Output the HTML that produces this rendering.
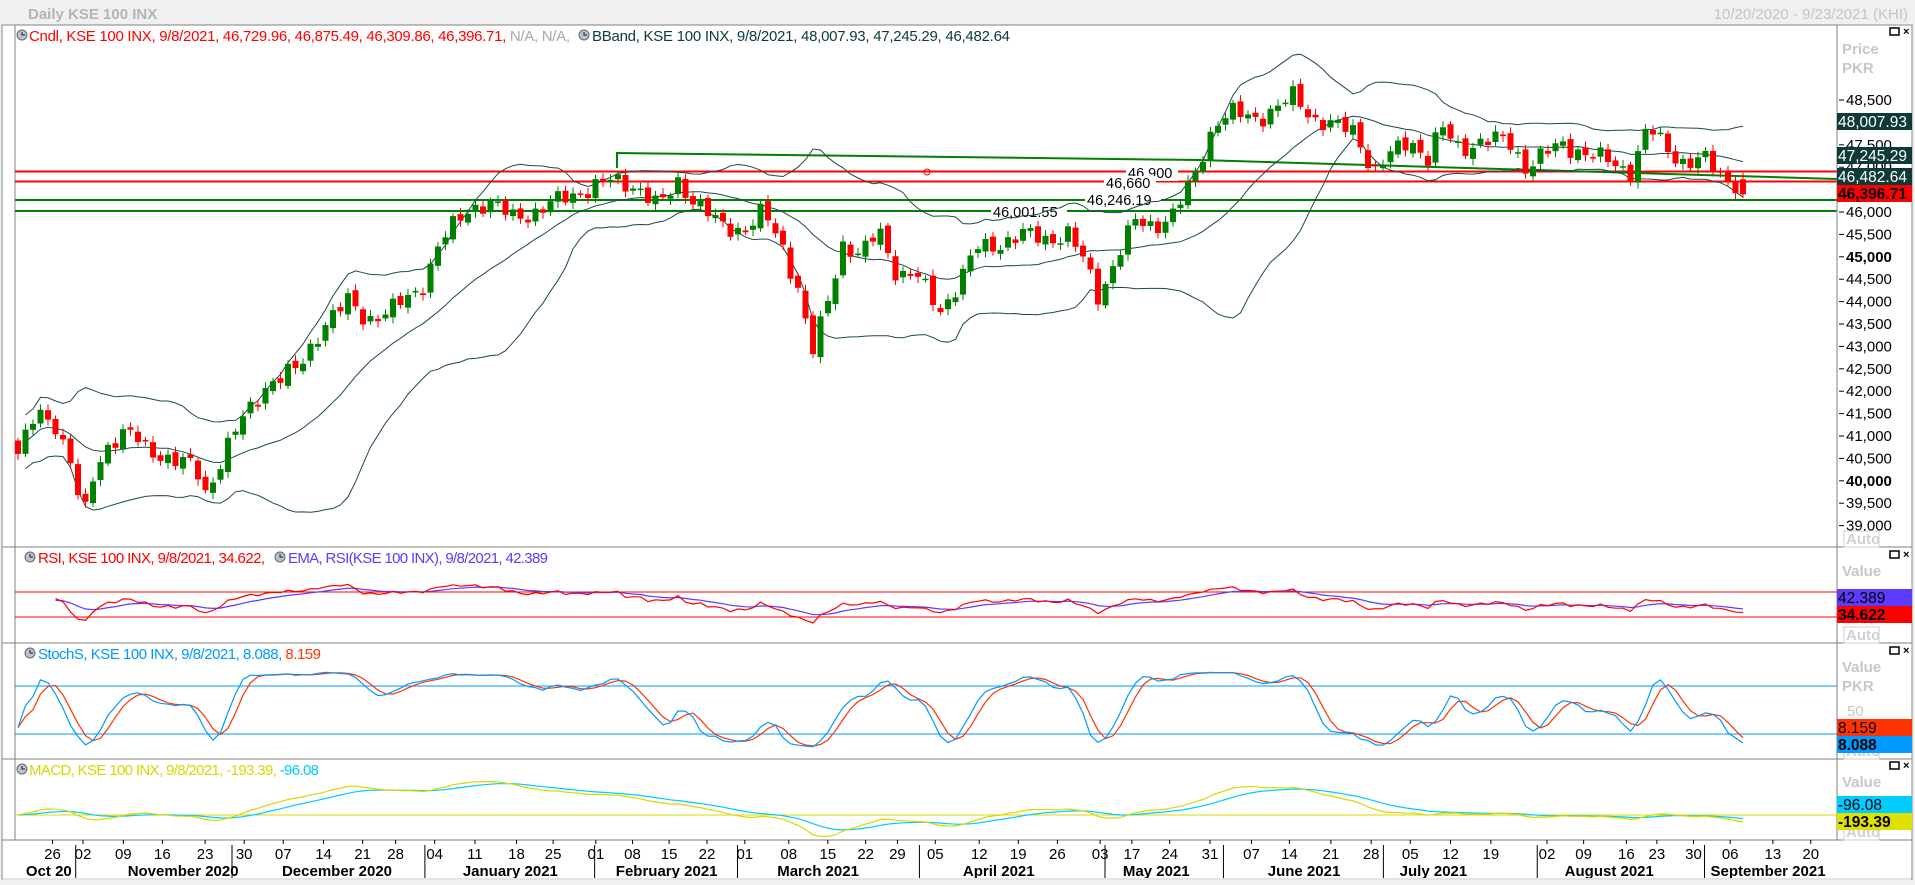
<!DOCTYPE html>
<html><head><meta charset="utf-8">
<style>
html,body{margin:0;padding:0;background:#f0f0f0;width:1915px;height:885px;overflow:hidden;font-family:"Liberation Sans",sans-serif;}
svg{display:block}
text{font-family:"Liberation Sans",sans-serif;}
</style></head><body>
<svg id="s" width="1915" height="885" viewBox="0 0 1915 885" xmlns="http://www.w3.org/2000/svg">
<rect x="0" y="0" width="1915" height="885" fill="#f0f0f0"/>
<rect x="2" y="25" width="1910" height="854" fill="#fff" stroke="#8a8a8a"/>
<rect x="15" y="25" width="1822" height="815" fill="#fff" stroke="#808080"/>
<text x="28" y="19" font-size="15" font-weight="bold" fill="#b4b4b4">Daily KSE 100 INX</text>
<text x="1908" y="19" font-size="15" fill="#c4c4c4" text-anchor="end">10/20/2020 - 9/23/2021 (KHI)</text>
<g id="g"></g>
</svg>
<script>
var g=document.getElementById('g');var h='';
function add(s){h+=s;}
var kp=[[15,40600],[30,41500],[45,41300],[60,40300],[68,39000],[75,40000],[90,40900],[105,41100],[120,40700],[140,40500],[160,40300],[168,39700],[180,40400],[190,41000],[205,41600],[220,42200],[245,42500],[265,43500],[285,44000],[300,43600],[320,43800],[345,44300],[360,45300],[375,45800],[385,46100],[400,46200],[420,45900],[440,46000],[460,46300],[480,46500],[500,46700],[520,46600],[540,46100],[555,46700],[570,46200],[590,45700],[610,45600],[625,46000],[640,45300],[655,44200],[665,42800],[680,44200],[690,45300],[705,45000],[720,45600],[735,44600],[750,44600],[770,43800],[785,44400],[800,45200],[820,45300],[840,45500],[860,45400],[875,45500],[890,44800],[900,44100],[915,45000],[930,45800],[945,45700],[960,45900],[975,46600],[985,47300],[995,48000],[1010,48200],[1030,48100],[1045,48300],[1060,48600],[1075,48100],[1095,47900],[1110,47800],[1125,46900],[1140,47300],[1155,47600],[1170,47200],[1180,47900],[1195,47400],[1215,47600],[1235,47600],[1250,47000],[1265,47300],[1280,47500],[1300,47300],[1320,47100],[1335,46900],[1350,47900],[1365,47400],[1380,47100],[1395,47200],[1410,46800],[1425,46600],[1432,46400]];
function interp(t){if(t<=kp[0][0])return kp[0][1];for(var k=1;k<kp.length;k++){if(t<=kp[k][0]){var a=kp[k-1],b=kp[k];return a[1]+(b[1]-a[1])*(t-a[0])/(b[0]-a[0]);}}return kp[kp.length-1][1];}
function py(p){return 100+(48500-p)*0.0448;}
var N=231,X=[],C=[],O=[],H=[],L=[];
for(var i=0;i<N;i++){var x=18+i*7.5;X.push(x);var c=interp(x/1.221)+150*Math.sin(i*2.3)+100*Math.sin(i*0.9);if(i==N-1)c=46396;C.push(c);}
for(var i=0;i<N;i++){var o=i?C[i-1]+70*Math.sin(i*3.1):40900;O.push(o);H.push(Math.max(o,C[i])+60+80*Math.abs(Math.sin(i*1.3)));L.push(Math.min(o,C[i])-60-80*Math.abs(Math.cos(i*1.7)));}
O[N-1]=46730;H[N-1]=46875;L[N-1]=46310;
add('<line x1="15" x2="1837" y1="171.5" y2="171.5" stroke="#ff0000" stroke-width="2"/>');
add('<line x1="15" x2="1837" y1="181.5" y2="181.5" stroke="#ff0000" stroke-width="2"/>');
add('<line x1="15" x2="1837" y1="200" y2="200" stroke="#008000" stroke-width="2"/>');
add('<line x1="15" x2="1837" y1="211" y2="211" stroke="#008000" stroke-width="2"/>');
add('<polyline points="617,168 617,153 1200,160 1837,179" fill="none" stroke="#008000" stroke-width="2"/>');
add('<circle cx="927" cy="172" r="3" fill="none" stroke="#ff0000"/>');
function lbl(x,y,t){add('<rect x="'+(x-2)+'" y="'+(y-12)+'" width="'+(t.length*8+4)+'" height="15" fill="#fff"/><text x="'+x+'" y="'+y+'" font-size="14.5" fill="#000">'+t+'</text>');}
lbl(1128,178,'46,900');lbl(1106,188,'46,660');lbl(1087,205,'46,246.19');lbl(993,217,'46,001.55');
var up=[],mid=[],lo=[];
for(var i=1;i<N;i++){var n=Math.min(i+1,20),s=0;for(var j=i-n+1;j<=i;j++)s+=C[j];var m=s/n,v=0;for(var j=i-n+1;j<=i;j++)v+=(C[j]-m)*(C[j]-m);var sd=Math.sqrt(v/n);if(i<6)sd=Math.max(sd,300);up.push(X[i]+','+py(m+2*sd).toFixed(1));mid.push(X[i]+','+py(m).toFixed(1));lo.push(X[i]+','+py(m-2*sd).toFixed(1));}
[up,mid,lo].forEach(function(a){add('<polyline points="'+a.join(' ')+'" fill="none" stroke="#1a4a4a" stroke-width="1"/>');});
for(var i=0;i<N;i++){var col=C[i]>=O[i]?'#008000':'#ff0000';var x=X[i];var t=py(Math.max(O[i],C[i])),b=py(Math.min(O[i],C[i]));if(b-t<1.5)b=t+1.5;
add('<line x1="'+x+'" x2="'+x+'" y1="'+py(H[i]).toFixed(1)+'" y2="'+py(L[i]).toFixed(1)+'" stroke="'+col+'"/><rect x="'+(x-3)+'" y="'+t.toFixed(1)+'" width="6" height="'+(b-t).toFixed(1)+'" fill="'+col+'"/>');}
[547,643,759,840].forEach(function(y){add('<line x1="2" x2="1912" y1="'+y+'" y2="'+y+'" stroke="#808080"/>');});
add('<line x1="1837" x2="1837" y1="25" y2="840" stroke="#808080"/>');
function ema(a,n){var k=2/(n+1),r=[],e=a[0];for(var i=0;i<a.length;i++){e=i?a[i]*k+e*(1-k):a[0];r.push(e);}return r;}
var rsi=[],ag=0,al=0;for(var i=0;i<N;i++){if(i==0){rsi.push(50);continue;}var d=C[i]-C[i-1];var gg=Math.max(d,0),ll=Math.max(-d,0);ag=(ag*13+gg)/14;al=(al*13+ll)/14;rsi.push(al==0?50:100-100/(1+ag/al));}
var rsiE=ema(rsi,9);
function ry(v){return 604.5-(v-50)*0.625;}
add('<line x1="15" x2="1837" y1="592" y2="592" stroke="#ff0000"/><line x1="15" x2="1837" y1="617" y2="617" stroke="#ff0000"/>');
function pl(a,f,col,st){var p=[];for(var i=st;i<N;i++)p.push(X[i]+','+f(a[i]).toFixed(1));add('<polyline points="'+p.join(' ')+'" fill="none" stroke="'+col+'" stroke-width="1.2"/>');}
pl(rsiE,ry,'#5b3cff',5);pl(rsi,ry,'#ff0000',5);
var k=[];for(var i=0;i<N;i++){var hh=-1e9,ll2=1e9;for(var j=Math.max(0,i-13);j<=i;j++){hh=Math.max(hh,H[j]);ll2=Math.min(ll2,L[j]);}k.push(100*(C[i]-ll2)/(hh-ll2));}
var ks=[],ds=[];for(var i=0;i<N;i++){var s=0,n=0;for(var j=Math.max(0,i-2);j<=i;j++){s+=k[j];n++;}ks.push(s/n);}
for(var i=0;i<N;i++){var s=0,n=0;for(var j=Math.max(0,i-2);j<=i;j++){s+=ks[j];n++;}ds.push(s/n);}
function sy(v){return 710-(v-50)*0.8;}
add('<line x1="15" x2="1837" y1="686" y2="686" stroke="#0099ff"/><line x1="15" x2="1837" y1="734" y2="734" stroke="#0099ff"/>');
pl(ds,sy,'#ff3300',0);pl(ks,sy,'#0099ff',0);
var e12=ema(C,12),e26=ema(C,26),mac=[];for(var i=0;i<N;i++)mac.push(e12[i]-e26[i]);var sig=ema(mac,9);
function my(v){return 815-v*0.035;}
add('<line x1="15" x2="1837" y1="815" y2="815" stroke="#d8d800"/>');
pl(sig,my,'#00ccff',0);pl(mac,my,'#d8d800',0);
function icon(x,y){add('<circle cx="'+x+'" cy="'+y+'" r="5" fill="#b8c4cc" stroke="#667"/><path d="M'+x+' '+(y-3)+'V'+y+'H'+(x+3)+'" stroke="#222" fill="none" stroke-width="1"/>');}
function FS(w){return ' font-size="15" textLength="'+w+'" lengthAdjust="spacing"';}
icon(22,35);add('<text x="29" y="41"'+FS(541)+'><tspan fill="#ff0000">Cndl, KSE 100 INX, 9/8/2021, 46,729.96, 46,875.49, 46,309.86, 46,396.71,</tspan><tspan fill="#a8a8a8"> N/A, N/A,</tspan></text>');
icon(584,35);add('<text x="592" y="41"'+FS(418)+' fill="#0b3b3b">BBand, KSE 100 INX, 9/8/2021, 48,007.93, 47,245.29, 46,482.64</text>');
icon(30,557);add('<text x="38" y="563"'+FS(227)+' fill="#ff0000">RSI, KSE 100 INX, 9/8/2021, 34.622,</text>');
icon(280,557);add('<text x="288" y="563"'+FS(260)+' fill="#5b3cff">EMA, RSI(KSE 100 INX), 9/8/2021, 42.389</text>');
icon(30,653);add('<text x="38" y="659"'+FS(283)+'><tspan fill="#0099ff">StochS, KSE 100 INX, 9/8/2021, 8.088, </tspan><tspan fill="#ff3300">8.159</tspan></text>');
icon(22,769);add('<text x="29" y="775"'+FS(290)+'><tspan fill="#d8d800">MACD, KSE 100 INX, 9/8/2021, -193.39, </tspan><tspan fill="#00ccff">-96.08</tspan></text>');
function wc(y){add('<rect x="1890" y="'+(y-5)+'" width="9" height="7" fill="none" stroke="#000" stroke-width="1.5"/><text x="1903" y="'+(y+2)+'" font-size="11" font-weight="bold">×</text>');}
wc(33);wc(556);wc(652);wc(767);
add('<text x="1842" y="54" font-size="15" font-weight="bold" fill="#c8c8c8">Price</text><text x="1842" y="73" font-size="15" font-weight="bold" fill="#c8c8c8">PKR</text>');
for(var p=48500;p>=39000;p-=500){var y=py(p);var b=(p==45000||p==40000);add('<line x1="1839" x2="1844" y1="'+y+'" y2="'+y+'" stroke="#000"/><text x="1846" y="'+(y+5)+'" font-size="15"'+(b?' font-weight="bold"':'')+'>'+(p+'').replace(/(\d\d)(\d\d\d)/,'$1,$2')+'</text>');}
function auto(y){add('<rect x="1844" y="'+y+'" width="35" height="16" fill="#fff" stroke="#ccc"/><text x="1846" y="'+(y+13)+'" font-size="15" font-weight="bold" fill="#d0d0d0">Auto</text>');}
auto(531);auto(627);auto(743);auto(824);
function box(y,bg,fg,t,bold){add('<rect x="1837" y="'+y+'" width="75" height="17" fill="'+bg+'"/><text x="1838" y="'+(y+14)+'" font-size="15.5"'+(bold?' font-weight="bold"':'')+' fill="'+fg+'">'+t+'</text>');}
box(113,'#0e3a3a','#fff','48,007.93');box(147,'#0e3a3a','#fff','47,245.29');box(168,'#0e3a3a','#fff','46,482.64');box(185,'#ff0000','#000','46,396.71',true);
add('<text x="1842" y="576" font-size="15" font-weight="bold" fill="#c8c8c8">Value</text><text x="1842" y="672" font-size="15" font-weight="bold" fill="#c8c8c8">Value</text><text x="1842" y="691" font-size="15" font-weight="bold" fill="#c8c8c8">PKR</text><text x="1847" y="716" font-size="15" fill="#c8c8c8">50</text><text x="1842" y="787" font-size="15" font-weight="bold" fill="#c8c8c8">Value</text>');
box(589,'#5b3cff','#000','42.389');box(606,'#ff0000','#000','34.622',true);
box(719,'#ff3300','#000','8.159');box(736,'#0099ff','#000','8.088',true);
box(796,'#00ccff','#000','-96.08');box(813,'#e0e000','#000','-193.39',true);
var days=[[43,'26'],[68,'02'],[101,'09'],[133,'16'],[168,'23'],[200,'30'],[232,'07'],[265,'14'],[297,'21'],[324,'28'],[356,'04'],[389,'11'],[423,'18'],[453,'25'],[488,'01'],[518,'08'],[548,'15'],[579,'22'],[610,'01'],[646,'08'],[678,'15'],[709,'22'],[735,'29'],[766,'05'],[802,'12'],[834,'19'],[866,'26'],[901,'03'],[927,'17'],[958,'24'],[991,'31'],[1025,'07'],[1056,'14'],[1090,'21'],[1123,'28'],[1155,'05'],[1188,'12'],[1221,'19'],[1267,'02'],[1297,'09'],[1332,'16'],[1357,'23'],[1387,'30'],[1417,'06'],[1452,'13'],[1483,'20']];
days.forEach(function(d){var x=d[0]*1.221;add('<line x1="'+x+'" x2="'+x+'" y1="840" y2="844" stroke="#000"/><text x="'+x+'" y="859" font-size="15" text-anchor="middle">'+d[1]+'</text>');});
var mons=[[40,'Oct 20'],[150,'November 2020'],[276,'December 2020'],[418,'January 2021'],[546,'February 2021'],[670,'March 2021'],[818,'April 2021'],[947,'May 2021'],[1068,'June 2021'],[1174,'July 2021'],[1318,'August 2021'],[1448,'September 2021']];
mons.forEach(function(m){add('<text x="'+(m[0]*1.221)+'" y="876" font-size="15" font-weight="bold" text-anchor="middle">'+m[1]+'</text>');});
[62,190,348,487,604,753,905,1002,1133,1259,1396].forEach(function(x){x*=1.221;add('<line x1="'+x+'" x2="'+x+'" y1="845" y2="878" stroke="#000"/>');});
add('<rect x="3" y="878" width="1908" height="2" fill="#e4e4e4"/>');
g.innerHTML=h;
</script>
</body></html>
